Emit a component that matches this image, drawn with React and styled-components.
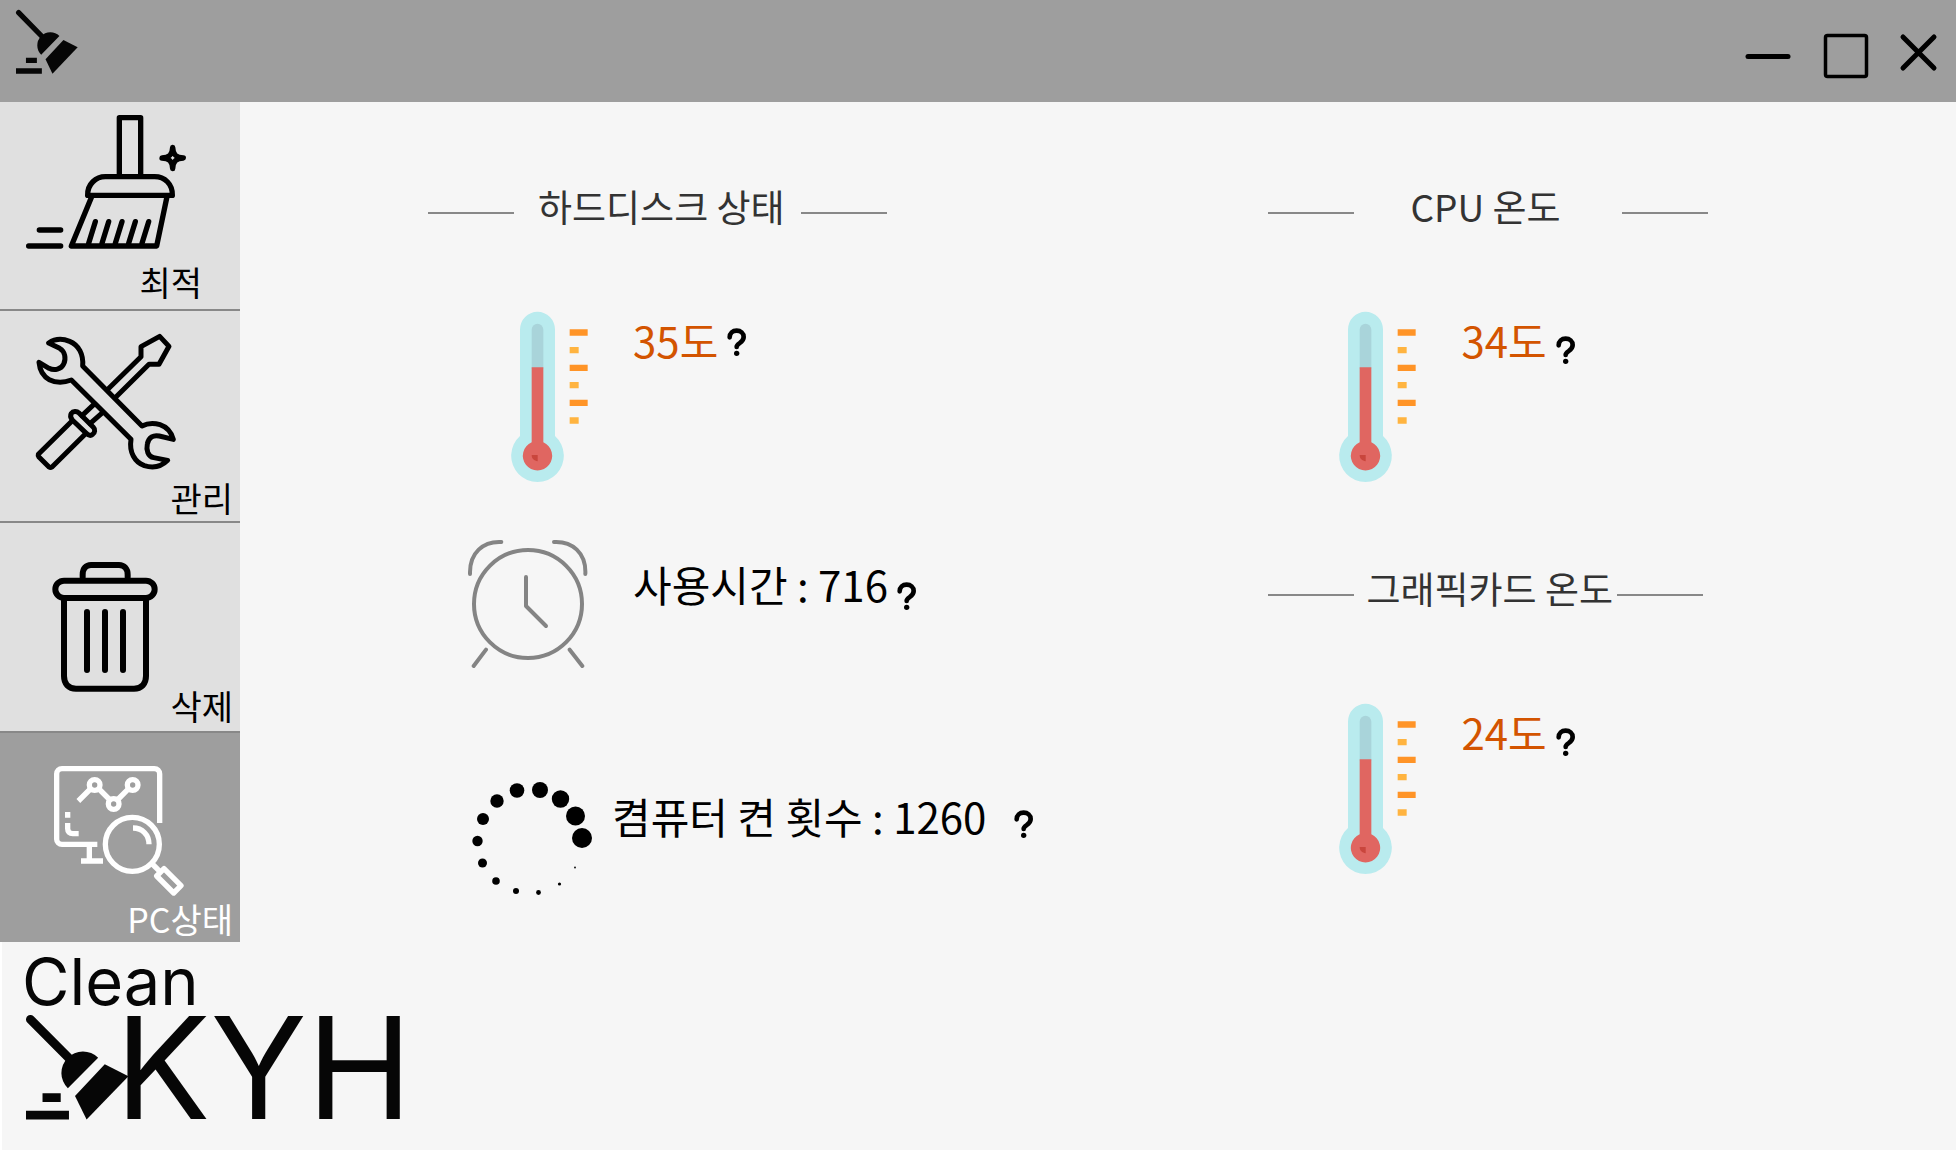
import React from "react";
import styled, { createGlobalStyle } from "styled-components";

const Global = createGlobalStyle`
  *, *::before, *::after { box-sizing: border-box; }
  body {
    margin: 0;
    background: #f6f6f6;
    color: #000;
    font-family: "Noto Sans CJK KR", sans-serif;
  }
  button {
    margin: 0;
    padding: 0;
    border: 0;
    background: none;
    color: inherit;
    font: inherit;
    cursor: pointer;
  }
  svg { display: block; flex: none; overflow: visible; }
`;

const Window = styled.div`
  display: flex;
  flex-direction: column;
  min-height: 100vh;
`;

const TitleBar = styled.header`
  display: flex;
  justify-content: space-between;
  align-items: flex-start;
  height: 102px;
  padding: 10px 19px 0 16px;
  background: #9e9e9e;
`;

const WindowControls = styled.div`
  display: flex;
  gap: 31px;
  padding-top: 23px;
`;

const Body = styled.div`
  display: flex;
`;

const Sidebar = styled.nav`
  display: flex;
  flex-direction: column;
  flex: none;
  width: 240px;
`;

const NavButton = styled.button`
  display: flex;
  flex-direction: column;
  min-height: ${(p) => p.$height}px;
  border-bottom: ${(p) => (p.$active ? "0" : "2px solid #888")};
  background: ${(p) => (p.$active ? "#9e9e9e" : "#e0e0e0")};
  color: ${(p) => (p.$active ? "#fff" : "#000")};
`;

const NavLabel = styled.span`
  align-self: flex-end;
  padding-right: ${(p) => p.$inset}px;
  font-size: 34px;
  line-height: 42px;
`;

const Main = styled.main`
  flex: 1;
  display: grid;
  grid-template-columns: 11fr 9fr;
  align-items: start;
  padding: 76px 0 0 188px;
`;

const Column = styled.div`
  display: flex;
  flex-direction: column;
`;

const Heading = styled.div`
  display: flex;
  align-items: center;
`;

const Rule = styled.span`
  flex: none;
  width: 86px;
  height: 2px;
  margin-top: 14px;
  background: #888;
`;

const Title = styled.h2`
  margin: 0 ${(p) => p.$after}px 0 ${(p) => p.$before}px;
  color: #333;
  font-size: 37px;
  line-height: 56px;
  font-weight: 400;
  white-space: nowrap;
`;

const Reading = styled.div`
  display: flex;
  align-items: flex-start;
  margin-top: ${(p) => p.$above}px;
  padding-left: ${(p) => p.$indent}px;
`;

const Value = styled.p`
  margin: ${(p) => p.$drop || 0}px 0 0 ${(p) => p.$gap || 45}px;
  color: ${(p) => (p.$warm ? "#d35400" : "#000")};
  font-size: 42px;
  line-height: 56px;
  white-space: nowrap;
`;

const HelpButton = styled.button`
  margin: ${(p) => p.$drop}px 0 0 ${(p) => p.$gap || 9}px;
`;

const Footer = styled.footer`
  flex: 1;
  padding: 8px 0 0 20px;
  border-left: 2px solid #fff;
  color: #060606;
  font-family: Inter, sans-serif;
`;

const BrandTop = styled.div`
  font-size: 65px;
  line-height: 64px;
  font-weight: 400;
`;

const BrandRow = styled.div`
  display: flex;
  align-items: flex-start;
  padding: 1px 0 0 4px;
`;

const BrandName = styled.div`
  margin-left: -14px;
  font-size: 142px;
  line-height: 104px;
  font-weight: 400;
`;

function Broom({ width, height }) {
  return (
    <svg width={width} height={height} viewBox="48 30 187 192" preserveAspectRatio="none" fill="#060606" aria-hidden="true">
      <path d="M56 38 125 108" stroke="#060606" strokeWidth="16" strokeLinecap="round" />
      <path d="M179 108A39 39 0 1 0 124 164Z" />
      <path d="M191 120 234 142 158 221 137 178Z" />
      <path d="M78 173H111V189H78ZM48 205H126V221H48Z" />
    </svg>
  );
}

function SweepIcon() {
  return (
    <svg width="240" height="159" viewBox="0 306 720 477" fill="none" stroke="currentColor" strokeWidth="16" strokeLinecap="round" strokeLinejoin="round" aria-hidden="true">
      <path d="M358 528V353H422V528" />
      <path d="M263 586C262 552 288 530 316 530H464C494 530 518 552 517 586Z" />
      <path d="M275 590 214 738H470L501 590" />
      <path d="M286 665 266 730M326 665 306 730M366 665 346 730M406 665 386 730M446 665 426 730" />
      <path d="M118 690H182M86 738H182" />
      <path d="M518 442C519 464 528 473 550 474C528 475 519 484 518 506C517 484 508 475 486 474C508 473 517 464 518 442Z" />
    </svg>
  );
}

function ToolsIcon() {
  return (
    <svg width="240" height="166" viewBox="0 3 720 498" fill="none" stroke="currentColor" strokeWidth="15" strokeLinecap="round" strokeLinejoin="round" aria-hidden="true">
      <path d="M322 239 423 140V110L479 79 507 109 477 163H447L347 262" />
      <path d="M281 284 246 317M305 310 270 341" />
      <path d="M216 333 115 433C114 436 114 438 116 440L147 471C150 473 153 473 156 471L256 372" />
      <path d="M214 310C219 303 230 302 237 309L280 352C286 358 285 368 278 373C271 379 264 375 259 370L217 330C212 324 210 317 214 310Z" />
      <path d="M248 168C251 133 236 105 209 94C189 86 165 86 146 99L179 115C195 124 199 146 191 162C184 178 163 183 147 175L117 157C119 179 129 199 148 209C168 219 190 219 214 210L393 388C387 427 404 456 433 467C459 475 483 471 503 451L461 443C444 440 438 420 442 402C446 381 461 374 478 378L520 388C514 367 501 351 480 344C461 338 443 339 426 348Z" />
    </svg>
  );
}

function TrashIcon() {
  return (
    <svg width="240" height="162" viewBox="0 -111 720 486" fill="none" stroke="currentColor" strokeWidth="18" strokeLinecap="round" strokeLinejoin="round" aria-hidden="true">
      <path d="M248 52V44C248 26 258 15 273 15H357C372 15 383 26 383 44V52" />
      <rect x="166" y="62" width="298" height="52" rx="26" />
      <path d="M192 116V348C192 372 206 386 228 386H402C424 386 438 372 438 348V116" />
      <path d="M261 156V330M315 156V330M369 156V330" />
    </svg>
  );
}

function MonitorIcon() {
  return (
    <svg width="240" height="165" viewBox="0 519 720 495" fill="none" stroke="currentColor" strokeWidth="16" aria-hidden="true">
      <path d="M292 853H186C177 853 170 846 170 838V642C170 633 177 626 186 626H463C472 626 479 633 479 642V789" />
      <path d="M268 853V903M243 903H309" />
      <path d="M203 756V773M203 789V806C203 815 209 821 218 821H236" />
      <circle cx="284" cy="675" r="16" />
      <circle cx="341" cy="732" r="16" />
      <circle cx="398" cy="675" r="16" />
      <path d="M235 723 271 687M297 687 330 720M352 720 386 686" />
      <circle cx="397" cy="853" r="81" />
      <path d="M399 804C427 804 447 824 447 853" />
      <path d="M454 909 480 935" />
      <path d="M492 926 543 977 521 999 470 948Z" strokeLinejoin="round" />
    </svg>
  );
}

function Thermometer() {
  return (
    <svg width="77" height="170" viewBox="0 0 231 510" role="img" aria-label="온도계">
      <path fill="#b9ebee" d="M27 52A52 52 0 0 1 132 52V372A79 79 0 1 1 27 372Z" />
      <path fill="#a9d4da" d="M62 170V53A17 17 0 0 1 97 53V170Z" />
      <path fill="#e06661" d="M62 166H97V391A44 44 0 1 1 62 391Z" />
      <path fill="#c9463d" d="M62 429H80V448C69 446 62 440 62 429Z" />
      <path fill="#ff9427" d="M176 52H230V71H176ZM176 158H230V177H176ZM176 263H230V282H176Z" />
      <path fill="#ffb440" d="M176 105H203V124H176ZM176 210H203V229H176ZM176 316H203V335H176Z" />
    </svg>
  );
}

function AlarmClock() {
  return (
    <svg width="120" height="128" viewBox="54 60 360 384" fill="none" stroke="#848484" strokeWidth="12" strokeLinecap="round" strokeLinejoin="round" role="img" aria-label="시계">
      <circle cx="234" cy="252" r="162" />
      <path d="M228 171V258L288 318" />
      <path d="M154 66C100 63 58 98 60 162M312 66C366 63 409 98 406 162" />
      <path d="M108 389 71 438M359 389 397 438" />
    </svg>
  );
}

const DOTS = [
  [110, 56, 10], [103.5, 34, 9.5], [88.5, 17, 8.7], [68, 8, 8], [45, 8.5, 7.3],
  [25, 19, 6.7], [11, 37, 6], [5.5, 59, 5.2], [10.5, 81, 4.5], [24, 99, 3.8],
  [44, 109, 3], [66.5, 110.5, 2.4], [87.5, 102, 1.6], [103, 85.5, 0.9],
];

function DotRing() {
  return (
    <svg width="120" height="114" viewBox="0 0 120 114" role="img" aria-label="횟수">
      {DOTS.map(([x, y, r]) => (
        <circle key={`${x}-${y}`} cx={x} cy={y} r={r} />
      ))}
    </svg>
  );
}

function Help({ drop, gap, topic }) {
  return (
    <HelpButton type="button" $drop={drop} $gap={gap} aria-label={`${topic} 도움말`}>
      <svg width="20" height="28" viewBox="0 0 60 84" fill="none" stroke="#000" strokeWidth="14" strokeLinecap="round" strokeLinejoin="round">
        <path d="M8 28C8 15 17 8 29 8C41 8 50 16 50 27C50 38 43 42 37 46C31 50 29 52 29 57" />
        <circle cx="29" cy="76" r="8" fill="#000" stroke="none" />
      </svg>
    </HelpButton>
  );
}

function SectionHeading({ children, before, after }) {
  return (
    <Heading>
      <Rule />
      <Title $before={before} $after={after}>{children}</Title>
      <Rule />
    </Heading>
  );
}

function Temperature({ degrees, above, indent, helpDrop, topic }) {
  return (
    <Reading $above={above} $indent={indent}>
      <Thermometer />
      <Value $warm>{degrees}도</Value>
      <Help drop={helpDrop} topic={topic} />
    </Reading>
  );
}

const NAV = [
  { label: "최적", icon: SweepIcon, height: 209, inset: 38 },
  { label: "관리", icon: ToolsIcon, height: 212, inset: 7 },
  { label: "삭제", icon: TrashIcon, height: 210, inset: 7 },
  { label: "PC상태", icon: MonitorIcon, height: 209, inset: 7, active: true },
];

export default function App() {
  return (
    <Window>
      <Global />
      <TitleBar>
        <Broom width={62} height={64} />
        <WindowControls>
          <button type="button" aria-label="최소화">
            <svg width="46" height="46" viewBox="0 0 46 46" stroke="#000" strokeWidth="5" strokeLinecap="round">
              <path d="M2 23.5H42" />
            </svg>
          </button>
          <button type="button" aria-label="최대화">
            <svg width="46" height="46" viewBox="0 0 46 46" fill="none" stroke="#000" strokeWidth="3.5">
              <rect x="2.5" y="2.5" width="41" height="41" rx="2" />
            </svg>
          </button>
          <button type="button" aria-label="닫기">
            <svg width="37" height="46" viewBox="0 0 37 46" stroke="#000" strokeWidth="5" strokeLinecap="round">
              <path d="M3 4 34 35M34 4 3 35" />
            </svg>
          </button>
        </WindowControls>
      </TitleBar>

      <Body>
        <Sidebar>
          {NAV.map(({ label, icon: Icon, height, inset, active }) => (
            <NavButton key={label} type="button" $height={height} $active={active} aria-current={active ? "page" : undefined}>
              <Icon />
              <NavLabel $inset={inset}>{label}</NavLabel>
            </NavButton>
          ))}
        </Sidebar>

        <Main>
          <Column>
            <SectionHeading before={24} after={16}>하드디스크 상태</SectionHeading>
            <Temperature degrees={35} above={78} indent={83} helpDrop={16} topic="하드디스크 온도" />
            <Reading $above={58} $indent={40}>
              <AlarmClock />
              <Value $drop={16}>사용시간 : 716</Value>
              <Help drop={42} topic="사용시간" />
            </Reading>
            <Reading $above={114} $indent={44}>
              <DotRing />
              <Value $drop={6} $gap={20}>켬퓨터 켠 횟수 : 1260</Value>
              <Help drop={28} gap={28} topic="켠 횟수" />
            </Reading>
          </Column>

          <Column>
            <SectionHeading before={56} after={62}>CPU 온도</SectionHeading>
            <Temperature degrees={34} above={78} indent={71} helpDrop={24} topic="CPU 온도" />
            <Reading $above={78} $indent={0}>
              <SectionHeading before={12} after={4}>그래픽카드 온도</SectionHeading>
            </Reading>
            <Temperature degrees={24} above={88} indent={71} helpDrop={24} topic="그래픽카드 온도" />
          </Column>
        </Main>
      </Body>

      <Footer>
        <BrandTop>Clean</BrandTop>
        <BrandRow>
          <Broom width={103} height={105} />
          <BrandName>KYH</BrandName>
        </BrandRow>
      </Footer>
    </Window>
  );
}
